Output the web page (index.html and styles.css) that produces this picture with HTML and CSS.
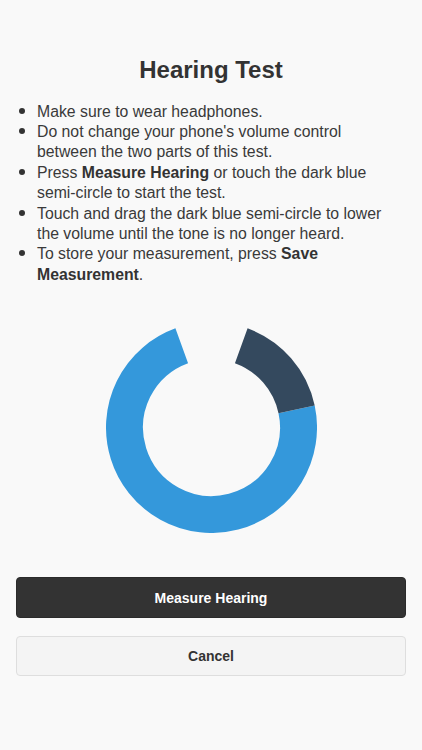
FILE: index.html
```html
<!DOCTYPE html>
<html lang="en">
<head>
<meta charset="utf-8">
<title>Hearing Test</title>
<link rel="stylesheet" href="styles.css">
</head>
<body>
<main class="page">
  <h1 class="title">Hearing Test</h1>
  <ul class="steps">
    <li>Make sure to wear headphones.</li>
    <li>Do not change your phone's volume control between the two parts of this test.</li>
    <li>Press <b>Measure Hearing</b> or touch the dark blue semi-circle to start the test.</li>
    <li>Touch and drag the dark blue semi-circle to lower the volume until the tone is no longer heard.</li>
    <li>To store your measurement, press <b>Save Measurement</b>.</li>
  </ul>
  <div class="dial">
    <svg width="211" height="211" viewBox="0 0 211 211">
      <path d="M190.60 87.41 A87 87 0 1 1 75.74 23.75" fill="none" stroke="#3498db" stroke-width="37"/>
      <path d="M135.26 23.75 A87 87 0 0 1 190.60 87.41" fill="none" stroke="#34495e" stroke-width="37"/>
    </svg>
  </div>
  <div class="actions">
    <button class="btn btn-primary">Measure Hearing</button>
    <button class="btn btn-secondary">Cancel</button>
  </div>
</main>
</body>
</html>
```
FILE: styles.css
```css
html, body {
  margin: 0;
  padding: 0;
  background: #f9f9f9;
}
body {
  font-family: "Liberation Sans", Arial, Helvetica, sans-serif;
  color: #333;
}
.page {
  padding: 56px 16px 0;
  display: flex;
  flex-direction: column;
}
.title {
  margin: 0;
  font-size: 24px;
  line-height: 28px;
  font-weight: bold;
  text-align: center;
  color: #333;
}
.steps {
  margin: 17.5px 0 0;
  padding: 0 14px 0 21px;
  list-style: none;
  font-size: 15.8px;
  line-height: 20.4px;
  color: #3a3a3a;
}
.steps li::before {
  content: "";
  display: inline-block;
  width: 6px;
  height: 6px;
  border-radius: 50%;
  background: #333;
  margin-left: -18px;
  margin-right: 12px;
  vertical-align: 3px;
}
.steps b {
  font-weight: bold;
  color: #333;
}
.dial {
  display: flex;
  justify-content: center;
  margin-top: 37px;
}
.dial svg {
  display: block;
}
.actions {
  display: flex;
  flex-direction: column;
  gap: 18px;
  margin-top: 44px;
}
.btn {
  font-family: "Liberation Sans", Arial, Helvetica, sans-serif;
  font-size: 14px;
  font-weight: bold;
  height: 41px;
  border-radius: 4px;
  cursor: pointer;
}
.btn-primary {
  background: #333;
  color: #fff;
  border: 1px solid #2b2b2b;
}
.btn-secondary {
  height: 40px;
  background: #f4f4f4;
  color: #333;
  border: 1px solid #dedede;
}
```
